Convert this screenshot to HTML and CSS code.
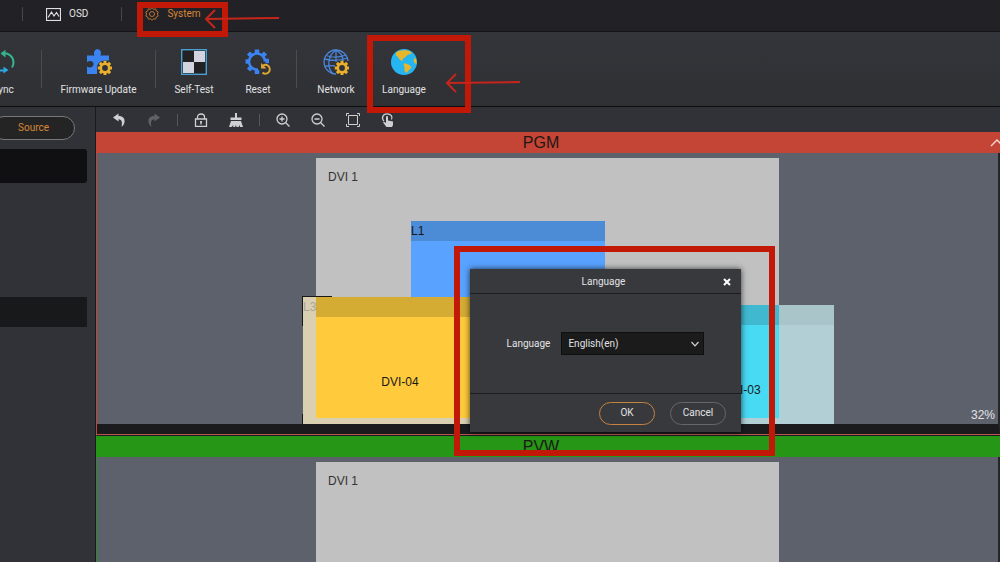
FILE: index.html
```html
<!DOCTYPE html>
<html lang="en">
<head>
    <meta charset="UTF-8">
    <meta name="viewport" content="width=device-width, initial-scale=1.0">
    <title>Language</title>
    <link rel="stylesheet" href="styles.css">
</head>
<body>

    <!-- Shared shapes -->
    <svg class="defs" aria-hidden="true">
        <defs>
            <g id="gear">
                <circle cx="8" cy="8" r="4.2" fill="none" stroke="currentColor" stroke-width="2.6"/>
                <g stroke="currentColor" stroke-width="3">
                    <path d="M8 .8V3.500M8 12.500V15.200M.8 8H3.500M12.500 8H15.200M2.900 2.900L5 5M11 11L13.100 13.100M13.100 2.900L11 5M5 11L2.900 13.100"/>
                </g>
            </g>
        </defs>
    </svg>

    <!-- Tabs -->
    <nav class="tabs">
        <span class="tab-line"></span>
        <button class="tab">
            <svg width="15" height="13" viewBox="0 0 15 13" fill="none" stroke="#e0e0e2">
                <rect x="0.5" y="0.5" width="14" height="12" stroke-width="1.2"/>
                <path d="M2 9.500L5.500 4L8 8L10.500 4.500L13 8.500" stroke-width="1.2"/>
            </svg>
            OSD
        </button>
        <span class="tab-line"></span>
        <button class="tab active">
            <svg width="14" height="14" viewBox="0 0 14 14" fill="none" stroke="#bd7135">
                <path d="M7 .8L8.600 2.200L10.700 1.900L11.300 3.900L13.200 5L12.400 7L13.200 9L11.300 10.100L10.700 12.100L8.600 11.800L7 13.200L5.400 11.800L3.300 12.100L2.700 10.100L.8 9L1.600 7L.8 5L2.700 3.900L3.300 1.900L5.400 2.200Z"/>
                <circle cx="7" cy="7" r="2.500"/>
            </svg>
            System
        </button>
    </nav>

    <!-- Ribbon -->
    <div class="ribbon">
        <div class="group group-first">
            <button class="tool">
                <svg width="26" height="26" viewBox="0 0 26 26" fill="none" stroke-width="2">
                    <path d="M12 4.500C19 3.500 23.500 8 23.500 13.500C23.500 15.500 23 17 22 18.500" stroke="#35b58c"/>
                    <path d="M15.500 .8L10.500 4.500L15.500 8.500Z" fill="#35b58c"/>
                    <path d="M10 21.500H14" stroke="#2ba8e0"/>
                    <path d="M13.500 17.500L18.500 21L13.500 24.500Z" fill="#2ba8e0"/>
                </svg>
                Sync
            </button>
        </div>
        <span class="line"></span>
        <div class="group">
            <button class="tool tool-wide">
                <svg width="26" height="26" viewBox="0 0 26 26">
                    <path fill="#3a83f0" d="M1 6.500H8.500C7 3 9 .3 11.500 .3S16 3 14.500 6.500H23V11.500H20C15 11 11.500 14 11 18V25H1V17.500C4 19.500 7.500 18 7.500 15S4 11 1 13Z"/>
                    <g transform="translate(11 11)" color="#eab02d"><use href="#gear"/></g>
                </svg>
                Firmware Update
            </button>
        </div>
        <span class="line"></span>
        <div class="group">
            <button class="tool">
                <svg width="26" height="26" viewBox="0 0 26 26">
                    <rect x=".7" y=".7" width="24.600" height="24.600" fill="#222224" stroke="#4aa0d0" stroke-width="1.4"/>
                    <path fill="#d2d5e0" d="M13 2H24V13H13ZM2 13H13V24H2Z"/>
                </svg>
                Self-Test
            </button>
            <button class="tool">
                <svg width="26" height="26" viewBox="0 0 26 26">
                    <path d="M13 20.500A8 8 0 1 1 20 12.500" fill="none" stroke="#3a83f0" stroke-width="2.600"/>
                    <path d="M12 .5V4M12 21V25M.5 12.500H4M20.500 12H24M3.500 4L6 6.500M20.500 4L18 6.500M3.500 21L6 18.500" stroke="#3a83f0" stroke-width="4.500"/>
                    <path d="M18 16.500C21 14.500 25 17 24.800 20.500C24.500 24.500 20 26 17.500 23.500" fill="none" stroke="#dda632" stroke-width="1.900"/>
                    <path d="M16 14V19.500H21.500Z" fill="#dda632"/>
                </svg>
                Reset
            </button>
        </div>
        <span class="line"></span>
        <div class="group group-net">
            <button class="tool">
                <svg width="26" height="26" viewBox="0 0 26 26">
                    <g fill="none" stroke="#4a86dc" stroke-width="1.3">
                        <path d="M13 25A12 12 0 1 1 25 12"/>
                        <path d="M13 1C4 7 4 19 10 25M13 1C18 4 20 8 20 12M13 1V13M1.500 10C9 12 17 12 24.500 9M3 6.500C9 8.500 17 8.500 23 6M2 17.500C6 16.500 9 16.500 12 17"/>
                    </g>
                    <g transform="translate(11 11)" color="#eab02d"><use href="#gear"/></g>
                </svg>
                Network
            </button>
            <button class="tool">
                <svg width="26" height="26" viewBox="0 0 26 26">
                    <circle cx="13" cy="13" r="13" fill="#25b5f0"/>
                    <path fill="#e8b62c" d="M5 3.500C9 .5 16 .8 19.500 2.500L20.500 5L17 5.500L14 8.500L12 9.500L11.500 12L9 11L7 8L5 6.500ZM13.500 14L18.500 16L20.500 18.500L18 21L15.500 24L13.500 22L13.500 18L12.500 16ZM24 8.500L25.500 11.500L25.700 15L23.500 14L22.500 11Z"/>
                </svg>
                Language
            </button>
        </div>
    </div>

    <div class="workspace">
        <!-- Source list -->
        <aside class="sidebar">
            <button class="source">Source</button>
            <div class="source-search"></div>
            <div class="source-row"></div>
        </aside>

        <main class="editor">
            <!-- Canvas toolbar -->
            <div class="toolbar">
                <button aria-label="Undo">
                    <svg width="14" height="14" viewBox="0 0 14 14"><path fill="#cfd0d3" d="M1 4.500L6.500 .5V3C11 3 13 5.500 12.500 9C12 11.500 11 13 9.500 13.700C10.500 9.500 10 6.500 6.500 6.300V8.500Z"/></svg>
                </button>
                <button aria-label="Redo" disabled>
                    <svg width="14" height="14" viewBox="0 0 14 14"><path fill="#606165" d="M13 4.500L7.500 .5V3C3 3 1 5.500 1.500 9C2 11.500 3 13 4.500 13.700C3.500 9.500 4 6.500 7.500 6.300V8.500Z"/></svg>
                </button>
                <span class="toolbar-line"></span>
                <button aria-label="Lock">
                    <svg width="14" height="14" viewBox="0 0 14 14" fill="none" stroke="#cfd0d3" stroke-width="1.3"><path d="M1.500 6H12.500V13.300H1.500ZM3.500 6V4C3.500 0 10.500 0 10.500 4V6M7 8V11.500M6 9H8"/></svg>
                </button>
                <button aria-label="Clear">
                    <svg width="14" height="14" viewBox="0 0 14 14"><path fill="#cfd0d3" d="M6 0H8V4.500H12.500V7H1.500V4.500H6ZM2 8H12L14 14H11L10.500 12L9.500 14H7.500L7 12L6 14H4L4.500 12L2.500 14H0Z"/></svg>
                </button>
                <span class="toolbar-line"></span>
                <button aria-label="Zoom in">
                    <svg width="14" height="14" viewBox="0 0 14 14" fill="none" stroke="#cfd0d3" stroke-width="1.3"><circle cx="6" cy="6" r="5"/><path d="M9.500 9.500L13.500 13.500M6 3.500V8.500M3.500 6H8.500"/></svg>
                </button>
                <button aria-label="Zoom out">
                    <svg width="14" height="14" viewBox="0 0 14 14" fill="none" stroke="#cfd0d3" stroke-width="1.3"><circle cx="6" cy="6" r="5"/><path d="M9.500 9.500L13.500 13.500M3.500 6H8.500"/></svg>
                </button>
                <button aria-label="Fit">
                    <svg width="14" height="14" viewBox="0 0 14 14" fill="none" stroke="#cfd0d3"><path d="M2.500 2.500H11.500V11.500H2.500ZM.5 3V.5H3M11 .5H13.500V3M13.500 11V13.500H11M3 13.500H.5V11"/></svg>
                </button>
                <button aria-label="Touch">
                    <svg width="14" height="14" viewBox="0 0 14 14"><path d="M3 8C0 5 2 .8 6 .8S12 4 10.500 6.500" fill="none" stroke="#cfd0d3" stroke-width="1.3"/><path fill="#cfd0d3" d="M5 3.500Q6 2.500 7 3.500V7.500L12 8.500V12L11 14H5.500L2 9.500L3 8.800L5 10Z"/></svg>
                </button>
            </div>

            <!-- Program -->
            <section class="panel pgm">
                <header>
                    <h2>PGM</h2>
                    <svg class="fold" width="15" height="8" viewBox="0 0 15 8" fill="none" stroke="#f3d8d4" stroke-width="1.4"><path d="M1 7L7 1L13 7"/></svg>
                </header>
                <div class="canvas">
                    <div class="screen">
                        <span class="screen-name">DVI 1</span>
                        <div class="layer layer-1">
                            <div class="fill"></div>
                            <span class="layer-id">L1</span>
                        </div>
                        <div class="layer layer-3">
                            <div class="fill"></div>
                            <span class="layer-id">L3</span>
                            <span class="layer-name">DVI-04</span>
                            <i class="corner corner-top"></i>
                            <i class="corner corner-bottom"></i>
                        </div>
                        <div class="layer layer-2">
                            <div class="fill"></div>
                            <span class="layer-name">DVI-03</span>
                        </div>
                    </div>
                    <span class="zoom">32%</span>
                </div>
            </section>

            <!-- Preview -->
            <section class="panel pvw">
                <header>
                    <h2>PVW</h2>
                </header>
                <div class="canvas">
                    <div class="screen">
                        <span class="screen-name">DVI 1</span>
                    </div>
                </div>
            </section>
        </main>
    </div>

    <!-- Language dialog -->
    <form class="dialog" role="dialog" aria-labelledby="dialogTitle">
        <header>
            <h1 id="dialogTitle">Language</h1>
            <button type="button" class="close" aria-label="Close">
                <svg width="8" height="8" viewBox="0 0 8 8" stroke="#fff" stroke-width="2"><path d="M1 1L7 7M7 1L1 7"/></svg>
            </button>
        </header>
        <div class="dialog-body">
            <label for="language">Language</label>
            <div class="select">
                <select id="language">
                    <option>English(en)</option>
                </select>
                <svg width="8" height="6" viewBox="0 0 8 6" fill="none" stroke="#d5d5d5" stroke-width="1.2"><path d="M.5 1L4 4.800L7.500 1"/></svg>
            </div>
        </div>
        <footer>
            <button type="button" class="ok">OK</button>
            <button type="button">Cancel</button>
        </footer>
    </form>

    <!-- Callouts -->
    <div class="mark mark-system"></div>
    <div class="mark mark-language"></div>
    <div class="mark mark-dialog"></div>
    <svg class="arrow arrow-system" width="76" height="20" viewBox="0 0 76 20"><path d="M11 1L2 10L11 19M2 10L75 9"/></svg>
    <svg class="arrow arrow-language" width="76" height="20" viewBox="0 0 76 20"><path d="M11 1L2 10L11 19M2 10L75 9"/></svg>

</body>
</html>
```

FILE: styles.css
```css
* {
    box-sizing: border-box;
}
body {
    display: flex;
    flex-direction: column;
    position: relative;
    height: 100vh;
    margin: 0;
    overflow: hidden;
    background: #303237;
    color: #e2e2e4;
    font-family: Roboto, "Liberation Sans", sans-serif;
    font-size: 10px;
    line-height: 12px;
}
button {
    padding: 0;
    border: 0;
    background: none;
    color: inherit;
    font: inherit;
}
h1, h2 {
    margin: 0;
    font-weight: normal;
}
svg {
    display: block;
    flex: none;
}
.defs {
    position: absolute;
    width: 0;
    height: 0;
}

/* Tabs */
.tabs {
    display: flex;
    flex: none;
    height: 32px;
    padding: 0 0 3px 22px;
    align-items: center;
    background: #222226;
    border-bottom: 1px solid #151518;
}
.tab {
    display: flex;
    align-items: center;
    gap: 8px;
    margin-left: 23px;
}
.tab-line {
    width: 1px;
    height: 14px;
    background: #46464a;
}
.tab + .tab-line {
    margin-left: 33px;
}
.tab.active {
    color: #d98637;
}

/* Ribbon */
.ribbon {
    display: flex;
    flex: none;
    height: 75px;
    align-items: center;
    background: linear-gradient(#33353a, #2e3034);
    border-bottom: 1px solid #0e0e10;
}
.group {
    display: flex;
    padding-top: 6px;
}
.group-first {
    margin-left: -29px;
}
.group-net {
    gap: 4px;
}
.tool {
    display: flex;
    flex-direction: column;
    align-items: center;
    gap: 9px;
    width: 64px;
}
.tool-wide {
    width: 101px;
}
.line {
    width: 1px;
    height: 38px;
    margin: 0 6px;
    background: #4b4c50;
}
.tool-wide + .line,
.group + .line + .group-net {
    margin-left: 1px;
}

.workspace {
    display: flex;
    flex: 1;
    min-height: 0;
}

/* Source list */
.sidebar {
    flex: none;
    width: 96px;
    padding: 9px 8px 0 0;
    border-right: 1px solid #1a1a1d;
}
.source {
    display: block;
    width: 83px;
    height: 24px;
    margin-left: -8px;
    border: 1px solid #77777b;
    border-radius: 12px;
    background: #242424;
    color: #d98637;
}
.source-search {
    height: 34px;
    margin-top: 9px;
    border-radius: 0 3px 3px 0;
    background: #101013;
}
.source-row {
    height: 30px;
    margin-top: 114px;
    background: #18191b;
}

/* Editor */
.editor {
    display: flex;
    flex: 1;
    flex-direction: column;
    min-width: 0;
}
.toolbar {
    display: flex;
    flex: none;
    align-items: center;
    gap: 21px;
    height: 25px;
    padding-left: 16px;
}
.toolbar-line {
    width: 1px;
    height: 12px;
    margin: 0 -5px;
    background: #55565a;
}
.panel header {
    display: flex;
    align-items: center;
    height: 21px;
    overflow: hidden;
    color: #1d1715;
    font-family: "Liberation Sans", sans-serif;
    line-height: 20px;
}
.panel h2 {
    flex: 1;
    padding-right: 14px;
    font-size: 16px;
    text-align: center;
}
.pgm {
    flex: none;
    border-bottom: 1px solid #b75750;
    border-left: 1px solid #c44536;
}
.pgm header {
    background: #c44536;
}
.pgm h2 {
    padding-right: 5px;
}
.fold {
    margin-right: -5px;
}
.canvas {
    display: flex;
    position: relative;
    justify-content: center;
    padding-top: 5px;
    border-right: 2px solid #252529;
    background: #5d616c;
}
.pgm .canvas {
    height: 281px;
    border-bottom: 10px solid #1b1b1e;
}
.pvw {
    display: flex;
    flex: 1;
    flex-direction: column;
    min-height: 0;
    border-top: 1px solid #1b1b1e;
    border-left: 1px solid #2c8a2c;
}
.pvw header {
    flex: none;
    margin-left: -1px;
    background: #259615;
}
.pvw .canvas {
    flex: 1;
    min-height: 0;
    overflow: hidden;
}
.screen {
    position: relative;
    width: 463px;
    height: 260px;
    padding: 12px;
    background: #c1c1c1;
    color: #333;
    font-family: "Liberation Sans", sans-serif;
    font-size: 12px;
    line-height: 14px;
}
.zoom {
    position: absolute;
    right: 3px;
    bottom: 1px;
    font-family: "Liberation Sans", sans-serif;
    font-size: 12px;
    line-height: 16px;
}

/* Layers sit freely on the screen and may hang over its edges */
.layer {
    position: absolute;
    width: 194px;
    color: #17191c;
    text-align: center;
}
.layer .fill {
    position: absolute;
    inset: 0;
}
.layer-id {
    position: absolute;
    top: 3px;
    left: 0;
}
.layer-name {
    position: relative;
}
.layer-1 {
    top: 63px;
    left: 95px;
    height: 110px;
}
.layer-1 .fill {
    background: linear-gradient(#4c8bd6 20px, #59a2ff 20px);
}
.layer-3 {
    top: 139px;
    left: -13px;
    height: 127px;
    padding-top: 78px;
    background: #d9cfb1;
}
.layer-3 .fill {
    inset: 0 0 6px 13px;
    background: linear-gradient(#d4ac34 20px, #ffca3b 20px);
}
.layer-3 .layer-id {
    color: #aaa69a;
}
.layer-2 {
    top: 147px;
    right: -55px;
    width: 184px;
    height: 119px;
    padding-top: 78px;
    background: linear-gradient(#a9c5c9 20px, #b1cfd4 20px);
}
.layer-2 .fill {
    inset: 0 55px 6px 0;
    background: linear-gradient(#40b8d0 20px, #48d9f3 20px);
}
.corner {
    position: absolute;
    left: -1px;
    border-left: 1px solid #18181a;
}
.corner-top {
    top: -1px;
    width: 30px;
    height: 30px;
    border-top: 1px solid #18181a;
}
.corner-bottom {
    bottom: 0;
    height: 10px;
}

/* Language dialog */
.dialog {
    position: absolute;
    top: 269px;
    left: 470px;
    width: 271px;
    background: #38393d;
    box-shadow: 0 0 6px rgba(0, 0, 0, 0.7);
}
.dialog header {
    display: flex;
    align-items: center;
    height: 25px;
    padding: 2px 10px 0 14px;
    border-bottom: 1px solid #1d1d20;
}
.dialog h1 {
    flex: 1;
    font-size: 10px;
    text-align: center;
}
.dialog-body {
    display: flex;
    align-items: center;
    justify-content: center;
    gap: 11px;
    height: 100px;
    border-bottom: 1px solid #1d1d20;
}
.select {
    position: relative;
}
.select select {
    appearance: none;
    display: block;
    width: 143px;
    height: 23px;
    padding: 0 6px;
    border: 1px solid #0f0f10;
    border-radius: 0;
    background: #1b1b1b;
    color: #e2e2e4;
    font: inherit;
}
.select svg {
    position: absolute;
    top: 9px;
    right: 5px;
    pointer-events: none;
}
.dialog footer {
    display: flex;
    align-items: center;
    justify-content: flex-end;
    gap: 15px;
    height: 38px;
    padding-right: 15px;
}
.dialog footer button {
    width: 56px;
    height: 23px;
    border: 1px solid #66676b;
    border-radius: 12px;
}
.dialog footer .ok {
    border-color: #c5833f;
}

/* Callouts drawn over the window */
.mark {
    position: absolute;
    border: 6px solid #c21807;
    pointer-events: none;
}
.mark-system {
    top: 2px;
    left: 137px;
    width: 91px;
    height: 35px;
}
.mark-language {
    top: 35px;
    left: 367px;
    width: 104px;
    height: 78px;
}
.mark-dialog {
    top: 246px;
    left: 454px;
    width: 321px;
    height: 210px;
}
.arrow {
    position: absolute;
    fill: none;
    stroke: #c5251b;
    stroke-width: 2;
    pointer-events: none;
}
.arrow-system {
    top: 9px;
    left: 204px;
}
.arrow-language {
    top: 73px;
    left: 445px;
}
```
